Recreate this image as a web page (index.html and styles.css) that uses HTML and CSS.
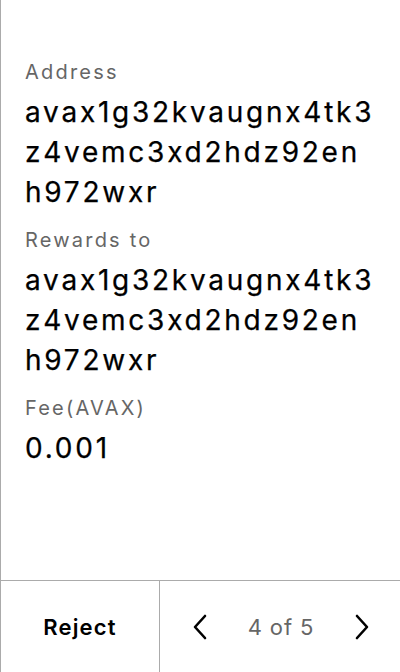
FILE: index.html
```html
<!DOCTYPE html>
<html>
<head>
<meta charset="utf-8">
<link rel="stylesheet" href="styles.css">
</head>
<body>
<div class="screen">
  <div class="content">
    <div class="field">
      <div class="label">Address</div>
      <div class="value">avax1g32kvaugnx4tk3z4vemc3xd2hdz92enh972wxr</div>
    </div>
    <div class="field">
      <div class="label">Rewards to</div>
      <div class="value">avax1g32kvaugnx4tk3z4vemc3xd2hdz92enh972wxr</div>
    </div>
    <div class="field">
      <div class="label">Fee(AVAX)</div>
      <div class="value">0.001</div>
    </div>
  </div>
  <div class="footer">
    <div class="reject">Reject</div>
    <div class="pager">
      <svg class="chev" width="16" height="28" viewBox="0 0 16 28"><path d="M13 3 L3 14 L13 25" fill="none" stroke="#000" stroke-width="2.6" stroke-linecap="round" stroke-linejoin="round"/></svg>
      <span class="count">4 of 5</span>
      <svg class="chev" width="16" height="28" viewBox="0 0 16 28"><path d="M3 3 L13 14 L3 25" fill="none" stroke="#000" stroke-width="2.6" stroke-linecap="round" stroke-linejoin="round"/></svg>
    </div>
  </div>
</div>
</body>
</html>
```
FILE: styles.css
```css
* { box-sizing: border-box; }
html, body { margin: 0; padding: 0; background: #fff; }
body { font-family: Inter, "Noto Sans", sans-serif; color: #000; }
.screen {
  width: 400px;
  height: 672px;
  border-left: 1px solid #ababab;
  display: flex;
  flex-direction: column;
}
.content {
  flex: 1;
  padding: 58px 24px 0 24px;
  display: flex;
  flex-direction: column;
  gap: 14px;
}
.field { display: flex; flex-direction: column; gap: 6px; }
.label { font-size: 20px; line-height: 28px; color: #666; letter-spacing: 2.2px; }
.value { font-size: 28px; line-height: 40px; color: #000; letter-spacing: 2.75px; word-break: break-all; -webkit-text-stroke: 0.25px #000; }
.footer {
  height: 92px;
  border-top: 1px solid #ababab;
  display: flex;
}
.reject {
  width: 159px;
  border-right: 1px solid #ababab;
  display: flex;
  align-items: center;
  justify-content: center;
  font-size: 22px;
  font-weight: 600;
  letter-spacing: 1.2px;
}
.pager {
  flex: 1;
  display: flex;
  align-items: center;
  justify-content: space-between;
  padding: 0 30px 0 32px;
}
.count { font-size: 22px; color: #666; letter-spacing: 0.9px; }
.chev { display: block; }
```
